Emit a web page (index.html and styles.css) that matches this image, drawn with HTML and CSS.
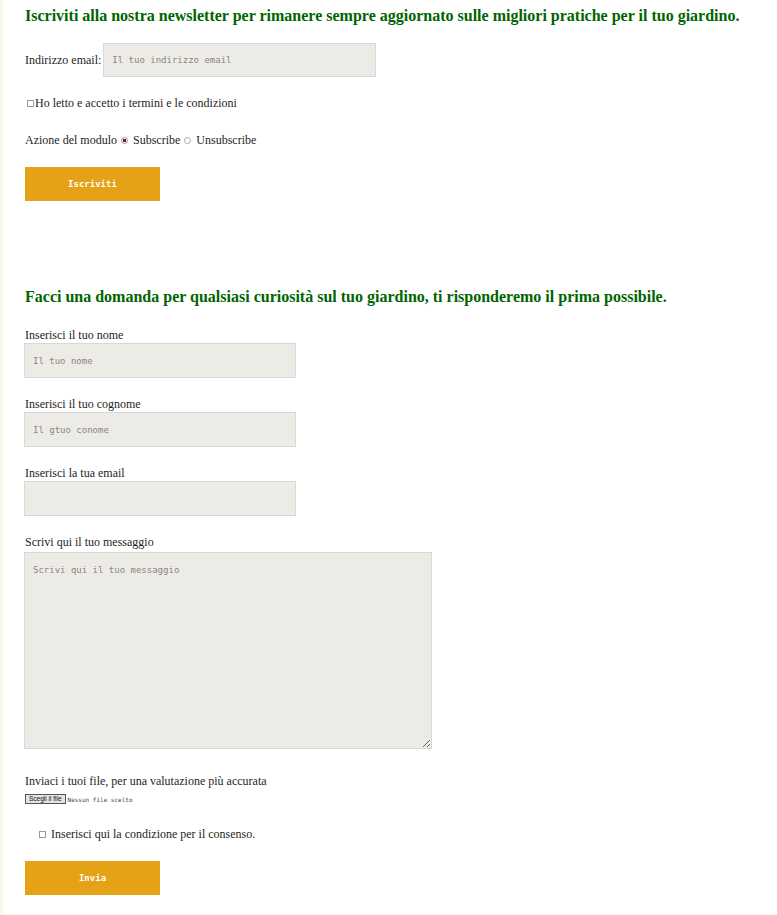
FILE: index.html
```html
<!DOCTYPE html>
<html lang="it">
<head>
<meta charset="utf-8">
<title>Newsletter e domande</title>
<link rel="stylesheet" href="styles.css">
</head>
<body>
<main class="page">
  <section class="newsletter">
    <h2 class="title">Iscriviti alla nostra newsletter per rimanere sempre aggiornato sulle migliori pratiche per il tuo giardino.</h2>
    <div class="email-row">
      <label class="lbl" for="nl-email">Indirizzo email:</label>
      <input class="input input-nl" id="nl-email" type="text" placeholder="Il tuo indirizzo email">
    </div>
    <div class="check-row">
      <input class="check" type="checkbox" id="terms">
      <label class="lbl" for="terms">Ho letto e accetto i termini e le condizioni</label>
    </div>
    <div class="radio-row">
      <span class="lbl">Azione del modulo</span>
      <input class="radio" type="radio" name="act" id="sub" checked>
      <label class="lbl" for="sub">Subscribe</label>
      <input class="radio" type="radio" name="act" id="unsub">
      <label class="lbl" for="unsub">Unsubscribe</label>
    </div>
    <button class="btn" type="button">Iscriviti</button>
  </section>

  <section class="question">
    <h2 class="title">Facci una domanda per qualsiasi curiosità sul tuo giardino, ti risponderemo il prima possibile.</h2>
    <div class="field">
      <label class="lbl" for="nome">Inserisci il tuo nome</label>
      <input class="input input-q" id="nome" type="text" placeholder="Il tuo nome">
    </div>
    <div class="field">
      <label class="lbl" for="cognome">Inserisci il tuo cognome</label>
      <input class="input input-q" id="cognome" type="text" placeholder="Il gtuo conome">
    </div>
    <div class="field">
      <label class="lbl" for="mail">Inserisci la tua email</label>
      <input class="input input-q" id="mail" type="text">
    </div>
    <div class="field">
      <label class="lbl" for="msg">Scrivi qui il tuo messaggio</label>
      <textarea class="input textarea" id="msg" placeholder="Scrivi qui il tuo messaggio"></textarea>
    </div>
    <div class="field field-file">
      <span class="lbl">Inviaci i tuoi file, per una valutazione più accurata</span>
      <div class="file">
        <span class="file-btn">Scegli il file</span>
        <span class="file-text">Nessun file scelto</span>
      </div>
    </div>
    <div class="consent-row">
      <input class="check" type="checkbox" id="consenso">
      <label class="lbl" for="consenso">Inserisci qui la condizione per il consenso.</label>
    </div>
    <button class="btn" type="button">Invia</button>
  </section>
</main>
</body>
</html>
```
FILE: styles.css
```css
html, body {
  margin: 0;
  padding: 0;
  background: #ffffff;
}
body {
  border-left: 3px solid #fcf6ea;
  min-height: 915px;
  box-sizing: border-box;
  font-family: "Liberation Serif", "Times New Roman", serif;
  font-size: 12px;
  color: #1e1e1e;
}
.page {
  padding: 0 0 20px 22px;
}
.title {
  margin: 0;
  font-size: 16px;
  line-height: 20px;
  font-weight: bold;
  color: #006400;
}
.newsletter .title {
  padding-top: 6px;
}
.lbl {
  font-size: 12px;
  line-height: 16px;
  color: #1e1e1e;
}
.input {
  box-sizing: border-box;
  background: #edebe6;
  border: 1px solid #d6d8da;
  border-radius: 0;
  font-family: "DejaVu Sans Mono", "Liberation Mono", monospace;
  font-size: 9px;
  color: #333;
  padding: 0 8px;
  outline: none;
}
.input::placeholder {
  color: #8a8580;
}
.email-row {
  display: flex;
  align-items: center;
  gap: 2px;
  margin-top: 17px;
}
.input-nl {
  width: 273px;
  height: 34px;
}
.check-row {
  display: flex;
  align-items: center;
  margin-top: 18px;
  height: 16px;
}
.check {
  appearance: none;
  -webkit-appearance: none;
  width: 7px;
  height: 7px;
  margin: 0 1px 0 2px;
  border: 1px solid #9a9a9a;
  background: #fff;
  box-sizing: border-box;
}
.radio-row {
  display: flex;
  align-items: center;
  margin-top: 21px;
  height: 16px;
}
.radio {
  appearance: none;
  -webkit-appearance: none;
  width: 7px;
  height: 7px;
  border-radius: 50%;
  border: 1px solid #a9a9a9;
  background: #fff;
  box-sizing: border-box;
  margin: 0 5px 0 4px;
}
.radio:checked {
  border-color: #b08a9a;
  background: radial-gradient(circle, #6a1b3a 0 1.6px, #fff 2px);
}
.btn {
  display: block;
  width: 135px;
  height: 34px;
  margin-top: 19px;
  border: none;
  border-radius: 0;
  background: #e6a217;
  color: #ffffff;
  font-family: "DejaVu Sans Mono", "Liberation Mono", monospace;
  font-weight: bold;
  font-size: 9px;
  cursor: pointer;
}
.question {
  margin-top: 86px;
}
.question .title {
  margin-bottom: 20px;
}
.field {
  display: flex;
  flex-direction: column;
  align-items: flex-start;
  margin-bottom: 18px;
}
.field .input {
  margin-left: -1px;
}
.input-q {
  width: 272px;
  height: 35px;
}
.textarea {
  width: 408px;
  height: 197px;
  margin-top: 2px;
  padding: 12px 8px;
  resize: vertical;
}
.field-file {
  margin-top: 24px;
  margin-bottom: 0;
}
.file {
  display: flex;
  align-items: center;
  gap: 2px;
  margin-top: 5px;
  height: 10px;
}
.file-btn {
  box-sizing: border-box;
  height: 10px;
  padding: 0 3px;
  border: 1px solid #555;
  background: #e4e4e4;
  font-family: "Liberation Sans", Arial, sans-serif;
  font-size: 6.5px;
  line-height: 8px;
  color: #111;
}
.file-text {
  font-family: "DejaVu Sans Mono", "Liberation Mono", monospace;
  font-size: 6px;
  color: #444;
}
.consent-row {
  display: flex;
  align-items: center;
  height: 16px;
  margin-top: 22px;
  padding-left: 12px;
}
.consent-row .check {
  margin-right: 5px;
}
.question .btn {
  margin-top: 19px;
}
```
